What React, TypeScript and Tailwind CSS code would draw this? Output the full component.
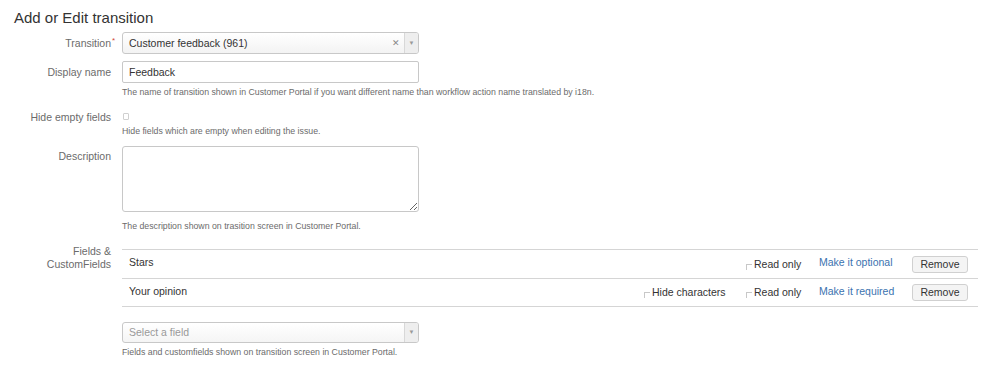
import React from "react";

function Label({ children, className = "" }: { children: React.ReactNode; className?: string }) {
  return (
    <div className={`w-[111px] shrink-0 text-right text-[10.5px] leading-[13px] text-[#6b6b6b] ${className}`}>
      {children}
    </div>
  );
}

function Help({ children, className = "" }: { children: React.ReactNode; className?: string }) {
  return <p className={`text-[8.75px] leading-[11px] text-[#6b6b6b] ${className}`}>{children}</p>;
}

function Tick({ className = "" }: { className?: string }) {
  return <span className={`inline-block w-[6px] h-[6px] border-t border-l border-[#c8c8c8] ${className}`} />;
}

function FieldRow({
  name,
  link,
  hideChars,
  last,
}: {
  name: string;
  link: string;
  hideChars?: boolean;
  last?: boolean;
}) {
  return (
    <div className={`flex items-center h-[29px] border-t border-[#d5d5d5] ${last ? "border-b" : ""}`}>
      <span className="flex-1 pl-[7px] pb-[3px] text-[10.5px] leading-[13px] text-[#333]">{name}</span>
      {hideChars && (
        <span className="w-[102px] flex items-center text-[10.5px] leading-[13px] text-[#333]">
          <Tick className="mt-[5px] mr-[2px]" />
          Hide characters
        </span>
      )}
      <span className="w-[73px] flex items-center text-[10.5px] leading-[13px] text-[#333]">
        <Tick className="mt-[5px] mr-[2px]" />
        Read only
      </span>
      <a className="w-[93px] pb-[3px] text-[10.5px] leading-[13px] text-[#3b73af]">{link}</a>
      <button className="w-[56px] h-[17px] mr-[10px] rounded-[3px] border border-[#d0d0d0] bg-[#f4f4f4] text-[10.5px] leading-[13px] text-[#333]">
        Remove
      </button>
    </div>
  );
}

export default function App() {
  return (
    <div className="w-[999px] h-[371px] overflow-hidden bg-white text-[#333] font-['Liberation_Sans',Arial,sans-serif]">
      <h2 className="pl-[14px] pt-[9px] text-[15px] leading-[17px] text-[#333]">Add or Edit transition</h2>

      {/* Transition */}
      <div className="flex items-center gap-[11px] mt-[6px]">
        <Label className="relative">
          Transition
          <span className="absolute -right-[4px] -top-[3px] text-[8px] text-[#d04437]">*</span>
        </Label>
        <div className="flex w-[297px] h-[22px] rounded-[3px] border border-[#c8c8c8] bg-gradient-to-b from-white to-[#f3f3f3] overflow-hidden">
          <span className="flex-1 pl-[6px] text-[10.5px] leading-[20px] text-[#333]">Customer feedback (961)</span>
          <span className="w-[16px] text-center text-[9px] leading-[20px] text-[#888]">✕</span>
          <span className="w-[14px] flex items-center justify-center border-l border-[#d8d8d8] bg-[#eeeeee] text-[6px] text-[#999]">▼</span>
        </div>
      </div>

      {/* Display name */}
      <div className="flex gap-[11px] mt-[7px]">
        <Label className="pt-[5px]">Display name</Label>
        <div>
          <div className="w-[297px] h-[22px] rounded-[2px] border border-[#c8c8c8] bg-white pl-[6px] text-[10.5px] leading-[20px] text-[#333]">
            Feedback
          </div>
          <Help className="mt-[4px]">
            The name of transition shown in Customer Portal if you want different name than workflow action name translated by i18n.
          </Help>
        </div>
      </div>

      {/* Hide empty fields */}
      <div className="flex gap-[11px] mt-[13px]">
        <Label>Hide empty fields</Label>
        <div>
          <div className="h-[13px] pt-[2px] pl-[1px]">
            <span className="block w-[6px] h-[7px] rounded-[1px] border border-[#d0d0d0]" />
          </div>
          <Help className="mt-[2px]">Hide fields which are empty when editing the issue.</Help>
        </div>
      </div>

      {/* Description */}
      <div className="flex gap-[11px] mt-[9px]">
        <Label className="pt-[4px]">Description</Label>
        <div>
          <textarea className="block w-[297px] h-[66px] rounded-[3px] border border-[#c8c8c8] bg-white outline-none" />
          <Help className="mt-[9px]">The description shown on trasition screen in Customer Portal.</Help>
        </div>
      </div>

      {/* Fields & CustomFields */}
      <div className="flex gap-[11px] mt-[13px]">
        <Label>
          Fields &amp;
          <br />
          CustomFields
        </Label>
        <div>
          <div className="w-[856px] mt-[4px]">
            <FieldRow name="Stars" link="Make it optional" />
            <FieldRow name="Your opinion" link="Make it required" hideChars last />
          </div>
          <div className="flex w-[297px] h-[21px] mt-[15px] rounded-[3px] border border-[#c8c8c8] bg-gradient-to-b from-white to-[#f5f5f5] overflow-hidden">
            <span className="flex-1 pl-[6px] text-[10.5px] leading-[19px] text-[#999]">Select a field</span>
            <span className="w-[14px] flex items-center justify-center border-l border-[#d8d8d8] bg-[#eeeeee] text-[6px] text-[#999]">▼</span>
          </div>
          <Help className="mt-[4px]">Fields and customfields shown on transition screen in Customer Portal.</Help>
        </div>
      </div>
    </div>
  );
}
